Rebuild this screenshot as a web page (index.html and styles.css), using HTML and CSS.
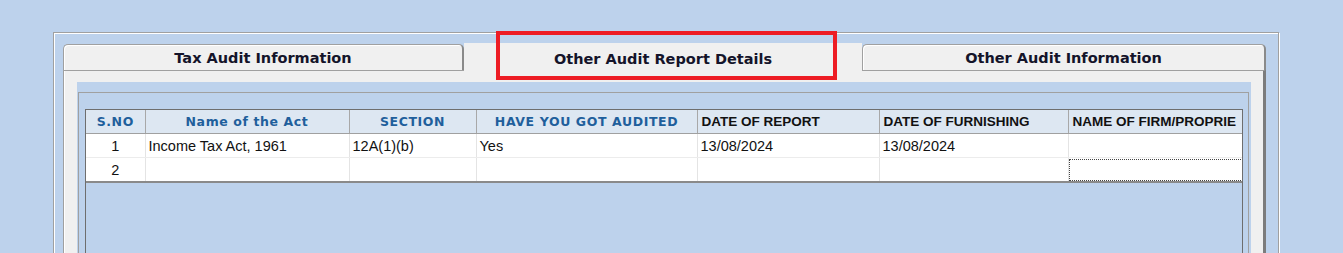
FILE: index.html
```html
<!DOCTYPE html>
<html lang="en">
<head>
  <meta charset="UTF-8" />
  <title>Other Audit Report Details</title>
  <link rel="stylesheet" href="styles.css">
</head>
<body>
  <div class="outer-panel">
    <div class="tab-strip">
      <div class="tab tab-first"><span>Tax Audit Information</span></div>
      <div class="tab tab-active">
        <span>Other Audit Report Details</span>
        <div class="mark-box"></div>
      </div>
      <div class="tab tab-last"><span>Other Audit Information</span></div>
    </div>
    <div class="tab-page">
      <div class="blue-panel">
        <div class="group-box">
          <div class="grid">
            <table class="audit-table">
              <colgroup>
                <col style="width:59px">
                <col style="width:204px">
                <col style="width:127px">
                <col style="width:221px">
                <col style="width:182px">
                <col style="width:189px">
                <col style="width:260px">
              </colgroup>
              <thead>
                <tr>
                  <th class="hd-blue">S.NO</th>
                  <th class="hd-blue">Name of the Act</th>
                  <th class="hd-blue">SECTION</th>
                  <th class="hd-blue">HAVE YOU GOT AUDITED</th>
                  <th class="hd-black">DATE OF REPORT</th>
                  <th class="hd-black">DATE OF FURNISHING</th>
                  <th class="hd-black">NAME OF FIRM/PROPRIE</th>
                </tr>
              </thead>
              <tbody>
                <tr>
                  <td class="sno">1</td>
                  <td>Income Tax Act, 1961</td>
                  <td>12A(1)(b)</td>
                  <td>Yes</td>
                  <td>13/08/2024</td>
                  <td>13/08/2024</td>
                  <td></td>
                </tr>
                <tr class="last-row">
                  <td class="sno">2</td>
                  <td></td>
                  <td></td>
                  <td></td>
                  <td></td>
                  <td></td>
                  <td class="focused"></td>
                </tr>
              </tbody>
            </table>
          </div>
        </div>
      </div>
    </div>
  </div>
</body>
</html>
```

FILE: styles.css
```css
html, body {
  margin: 0;
  padding: 0;
  background-color: #bdd2ec;
  overflow: hidden;
}

body {
  padding: 32px 0 0 53px;
  height: 253px;
  box-sizing: border-box;
}

.outer-panel {
  width: 1203px;
  height: 240px;
  border: 1px solid #a0a0a0;
  box-shadow: inset 1px 1px 0 #fff, 1px 1px 0 #fff;
  padding: 11px 12px 0 9px;
  display: flex;
  flex-direction: column;
}

.tab-strip {
  display: flex;
  align-items: flex-end;
  height: 26px;
}

.tab {
  height: 26px;
  box-sizing: border-box;
  background: #f0f0f0;
  border: 1px solid #a0a0a0;
  border-bottom: none;
  border-radius: 5px 5px 0 0;
  box-shadow: inset 1px 1px 0 #fff;
  display: flex;
  justify-content: center;
  align-items: center;
  font-family: "DejaVu Sans", Verdana, sans-serif;
  font-weight: bold;
  font-size: 14.5px;
  color: #14142a;
}

.tab span {
  padding-top: 1px;
}

.tab-first {
  width: 401px;
  border-right: 2px solid #8a8a8a;
}

.tab-last {
  width: 404px;
  border-right: 2px solid #8a8a8a;
}

.tab-active {
  width: 398px;
  height: 28px;
  margin-bottom: -1px;
  border: none;
  border-radius: 0;
  box-shadow: none;
  position: relative;
  z-index: 2;
}

.tab-active span {
  padding-top: 3px;
}

.mark-box {
  position: absolute;
  left: 32px;
  top: -12px;
  width: 341px;
  height: 49px;
  box-sizing: border-box;
  border: 4px solid #ed1c24;
}

.tab-page {
  flex: 1;
  min-height: 0;
  box-sizing: border-box;
  background: #f0f0f0;
  border-top: 1px solid #a0a0a0;
  border-left: 1px solid #a0a0a0;
  border-right: 3px solid #7c7c7c;
  box-shadow: inset 1px 0 0 #fff;
  padding: 11px 12px 0 13px;
  display: flex;
}

.blue-panel {
  flex: 1;
  min-width: 0;
  background: #bdd2ec;
  padding: 10px 2px 0 1px;
  display: flex;
}

.group-box {
  flex: 1;
  min-width: 0;
  border: 1px solid #a0a0a0;
  border-bottom: none;
  padding: 16px 5px 0 6px;
  display: flex;
}

.grid {
  flex: 1;
  min-width: 0;
  border: 1px solid #6e6e6e;
  border-bottom: none;
  background: #bdd2ec;
  overflow: hidden;
}

.audit-table {
  border-collapse: collapse;
  table-layout: fixed;
  width: 1242px;
  font-family: "Liberation Sans", Arial, sans-serif;
}

.audit-table th {
  height: 23px;
  padding: 0 4px;
  background: #dde7f2;
  border-right: 1px solid #a8a8a8;
  border-bottom: 1px solid #a0a0a0;
  white-space: nowrap;
  overflow: hidden;
}

.hd-blue {
  font-family: "DejaVu Sans", Verdana, sans-serif;
  font-size: 12.5px;
  letter-spacing: 0.6px;
  color: #1f5f9c;
  text-align: center;
}

.hd-black {
  font-size: 13.5px;
  color: #111;
  text-align: left;
}

.audit-table td {
  height: 23px;
  padding: 0 3px;
  background: #fff;
  font-size: 14.5px;
  color: #111;
  border-right: 1px solid #e4e4e4;
  border-bottom: 1px solid #ececec;
  white-space: nowrap;
  overflow: hidden;
}

.audit-table td.sno {
  text-align: center;
}

.last-row td {
  border-bottom: 2px solid #8a8a8a;
}

.audit-table td.focused {
  outline: 1px dotted #444;
  outline-offset: -2px;
}
```
